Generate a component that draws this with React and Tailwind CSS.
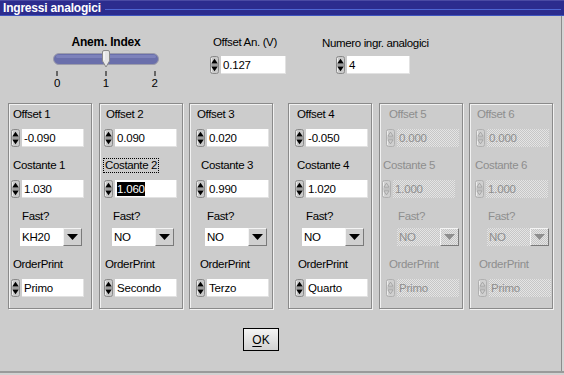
import React from "react";

function Spinner({ disabled }) {
  const fill = disabled ? "#9a9a9a" : "#000";
  return (
    <svg width="9" height="18" viewBox="0 0 9 18" className="shrink-0 block">
      <rect x="0.5" y="0.5" width="8" height="17" rx="2" fill={disabled ? "#d0d0d0" : "#c9c9c9"} stroke={disabled ? "#b0b0b0" : "#8a8a8a"} />
      <path d="M1.5 2V16" stroke="#ececec" />
      <path d="M0.5 9H8.5" stroke={disabled ? "#b0b0b0" : "#707070"} />
      {disabled ? (
        <>
          <path d="M1.8 7.2L4.5 3.2L7.2 7.2Z" fill="none" stroke={fill} strokeWidth="0.8" />
          <path d="M1.8 10.8L7.2 10.8L4.5 14.8Z" fill="none" stroke={fill} strokeWidth="0.8" />
        </>
      ) : (
        <>
          <path d="M1.2 7.5L4.5 2.8L7.8 7.5Z" fill={fill} />
          <path d="M1.2 10.5L7.8 10.5L4.5 15.2Z" fill={fill} />
        </>
      )}
    </svg>
  );
}

const checker =
  "bg-[repeating-conic-gradient(#e4e4e4_0_25%,#c6c6c6_0_50%)] bg-size-[2px_2px]";

function NumField({ value, disabled, selected, pad, w }) {
  return (
    <div className={`flex items-center h-[18px] ${pad}`}>
      <Spinner disabled={disabled} />
      <div
        className={`ml-[2px] h-[18px] ${w} flex items-center pl-[2px] text-[11.5px] leading-[14px] tracking-[-0.2px] ${
          disabled
            ? `${checker} text-[#8e8e8e]`
            : "bg-white text-black shadow-[inset_-1px_-1px_0_#e2e2e2]"
        }`}
      >
        {selected ? <span className="bg-black text-white">{value}</span> : value}
      </div>
    </div>
  );
}

function Dropdown({ value, disabled, pad }) {
  return (
    <div className={`flex h-[18px] ${pad}`}>
      <div
        className={`w-[43px] h-[18px] flex items-center pl-[2px] text-[11.5px] leading-[14px] tracking-[-0.2px] ${
          disabled ? `${checker} text-[#8e8e8e]` : "bg-white text-black"
        }`}
      >
        {value}
      </div>
      <div
        className={`w-[19px] h-[18px] flex items-center justify-center border-t border-l border-t-[#f4f4f4] border-l-[#f4f4f4] border-r border-b border-r-[#7a7a7a] border-b-[#7a7a7a] ${
          disabled ? checker : "bg-[#d0d0d0]"
        }`}
      >
        <svg width="11" height="6" viewBox="0 0 11 6">
          <path d="M0 0H11L5.5 6Z" fill={disabled ? "#8e8e8e" : "#000"} />
        </svg>
      </div>
    </div>
  );
}

const panels = [
  {
    n: 1, off: "-0.090", cost: "1.030", fast: "KH20", order: "Primo",
    ml: "ml-[8px]", lo: "pl-[4px]", lc: "pl-[4px]", lf: "pl-[13px]", lp: "pl-[4px]",
    so: "pl-[2px]", sc: "pl-[2px]", sp: "pl-[2px]", dd: "pl-[11px]",
  },
  {
    n: 2, off: "0.090", cost: "1.060", fast: "NO", order: "Secondo", focus: true,
    ml: "ml-[7px]", lo: "pl-[6px]", lc: "pl-[5px]", lf: "pl-[13px]", lp: "pl-[5px]",
    so: "pl-[4px]", sc: "pl-[4px]", sp: "pl-[4px]", dd: "pl-[12px]",
  },
  {
    n: 3, off: "0.020", cost: "0.990", fast: "NO", order: "Terzo",
    ml: "ml-[6px]", lo: "pl-[7px]", lc: "pl-[11px]", lf: "pl-[17px]", lp: "pl-[10px]",
    so: "pl-[6px]", sc: "pl-[6px]", sp: "pl-[6px]", dd: "pl-[15px]",
  },
  {
    n: 4, off: "-0.050", cost: "1.020", fast: "NO", order: "Quarto",
    ml: "ml-[15px]", lo: "pl-[8px]", lc: "pl-[8px]", lf: "pl-[17px]", lp: "pl-[9px]",
    so: "pl-[6px]", sc: "pl-[6px]", sp: "pl-[6px]", dd: "pl-[13px]",
  },
  {
    n: 5, off: "0.000", cost: "1.000", fast: "NO", order: "Primo", disabled: true,
    ml: "ml-[7px]", lo: "pl-[9px]", lc: "pl-[3px]", lf: "pl-[18px]", lp: "pl-[9px]",
    so: "pl-[6px]", sc: "pl-[2px]", sp: "pl-[6px]", dd: "pl-[17px]",
  },
  {
    n: 6, off: "0.000", cost: "1.000", fast: "NO", order: "Primo", disabled: true,
    ml: "ml-[6px]", lo: "pl-[7px]", lc: "pl-[5px]", lf: "pl-[18px]", lp: "pl-[9px]",
    so: "pl-[6px]", sc: "pl-[5px]", sp: "pl-[8px]", dd: "pl-[17px]",
  },
];

function Label({ children, pad, disabled, mt, focus }) {
  return (
    <div className={`h-[14px] flex items-center ${pad} ${mt}`}>
      <span
        className={`text-[11.5px] leading-[13px] tracking-[-0.35px] ${
          disabled ? "text-[#8e8e8e]" : "text-black"
        } ${focus ? "border border-dotted border-black px-[1px] -ml-[2px]" : ""}`}
      >
        {children}
      </span>
    </div>
  );
}

function Panel({ p }) {
  const d = p.disabled;
  return (
    <div
      className={`${p.ml} w-[84px] h-[206px] shrink-0 border border-[#8a8a8a] shadow-[inset_1px_1px_0_#f2f2f2,1px_1px_0_#f2f2f2] pt-[3px] flex flex-col`}
    >
      <Label pad={p.lo} disabled={d} mt="">{`Offset ${p.n}`}</Label>
      <div className="mt-[8px]">
        <NumField value={p.off} disabled={d} pad={p.so} w="w-[62px]" />
      </div>
      <Label pad={p.lc} disabled={d} mt="mt-[11px]" focus={p.focus}>{`Costante ${p.n}`}</Label>
      <div className="mt-[8px]">
        <NumField value={p.cost} disabled={d} pad={p.sc} w="w-[62px]" selected={p.focus} />
      </div>
      <Label pad={p.lf} disabled={d} mt="mt-[11px]">Fast?</Label>
      <div className="mt-[5px]">
        <Dropdown value={p.fast} disabled={d} pad={p.dd} />
      </div>
      <Label pad={p.lp} disabled={d} mt="mt-[11px]">OrderPrint</Label>
      <div className="mt-[8px]">
        <NumField value={p.order} disabled={d} pad={p.sp} w="w-[62px]" />
      </div>
    </div>
  );
}

export default function App() {
  return (
    <div className="w-[564px] h-[375px] overflow-hidden bg-[#cccccc] flex flex-col font-['Liberation_Sans',Arial,sans-serif] text-black">
      {/* title bar */}
      <div className="h-[16px] shrink-0 bg-[#2c2c8e] flex border-t border-t-[#4a4aa4] border-b border-b-[#3e54bf]">
        <div className="pl-[3px] text-white font-bold text-[12px] leading-[14px] tracking-[-0.2px] whitespace-nowrap">
          Ingressi analogici
        </div>
        <div className="flex-1 ml-[4px] mr-[3px] flex flex-col">
          <div className="mt-[8px] h-px bg-[#4e66d2]" />
        </div>
      </div>

      <div className="flex-1 flex">
        <div className="w-[561px] flex flex-col">
          {/* top section */}
          <div className="h-[87px] flex shrink-0">
            {/* slider */}
            <div className="ml-[50px] w-[112px] pt-[19px] flex flex-col">
              <div className="h-[14px] flex justify-center">
                <span className="font-bold text-[12px] leading-[14px] tracking-[-0.2px]">Anem. Index</span>
              </div>
              <svg width="112" height="28" viewBox="0 0 112 28" className="block">
                <rect x="3.5" y="4.5" width="105" height="11" rx="5.5" fill="#6a6fab" stroke="#9c9cab" />
                <rect x="6" y="6" width="100" height="3" rx="1.5" fill="#8a8fc6" opacity="0.6" />
                <path d="M7 22V27M56 22V27M105 22V27" stroke="#000" strokeWidth="1" />
                <path d="M52.5 3Q52.5 1.5 54 1.5H58Q59.5 1.5 59.5 3V12L56 18L52.5 12Z" fill="#e6e6e6" stroke="#8a8a8a" />
                <path d="M54 3V11" stroke="#ffffff" />
              </svg>
              <div className="ml-[4px] w-[104px] flex justify-between text-[11.5px] leading-[12px]">
                <span>0</span>
                <span>1</span>
                <span>2</span>
              </div>
            </div>

            {/* offset an */}
            <div className="ml-[48px] w-[77px] pt-[19px] flex flex-col">
              <div className="h-[14px] pl-[3px] flex items-center">
                <span className="text-[11.5px] leading-[13px] tracking-[-0.35px]">Offset An. (V)</span>
              </div>
              <div className="mt-[7px]">
                <NumField value="0.127" pad="" w="w-[65px]" />
              </div>
            </div>

            {/* numero */}
            <div className="ml-[35px] w-[110px] pt-[20px] flex flex-col">
              <div className="h-[14px] flex items-center">
                <span className="text-[11.5px] leading-[13px] tracking-[-0.35px] whitespace-nowrap">Numero ingr. analogici</span>
              </div>
              <div className="mt-[6px]">
                <NumField value="4" pad="pl-[14px]" w="w-[63px]" />
              </div>
            </div>
          </div>

          {/* panels */}
          <div className="flex shrink-0">
            {panels.map((p) => (
              <Panel key={p.n} p={p} />
            ))}
          </div>

          {/* OK */}
          <div className="mt-[19px] ml-[243px]">
            <button className="w-[36px] h-[23px] border border-black bg-gradient-to-b from-[#f4f4f4] to-[#d2d2d2] text-[12px] leading-[14px] flex items-center justify-center">
              <span>
                <span className="underline underline-offset-2">O</span>K
              </span>
            </button>
          </div>
        </div>
        <div className="w-px bg-[#8c8c8c]" />
        <div className="w-[2px] bg-[#d4d4d4]" />
      </div>
      <div className="h-[2px] shrink-0 bg-[#9a9a9a]" />
      <div className="h-[2px] shrink-0 bg-[#d2d2d2]" />
    </div>
  );
}
